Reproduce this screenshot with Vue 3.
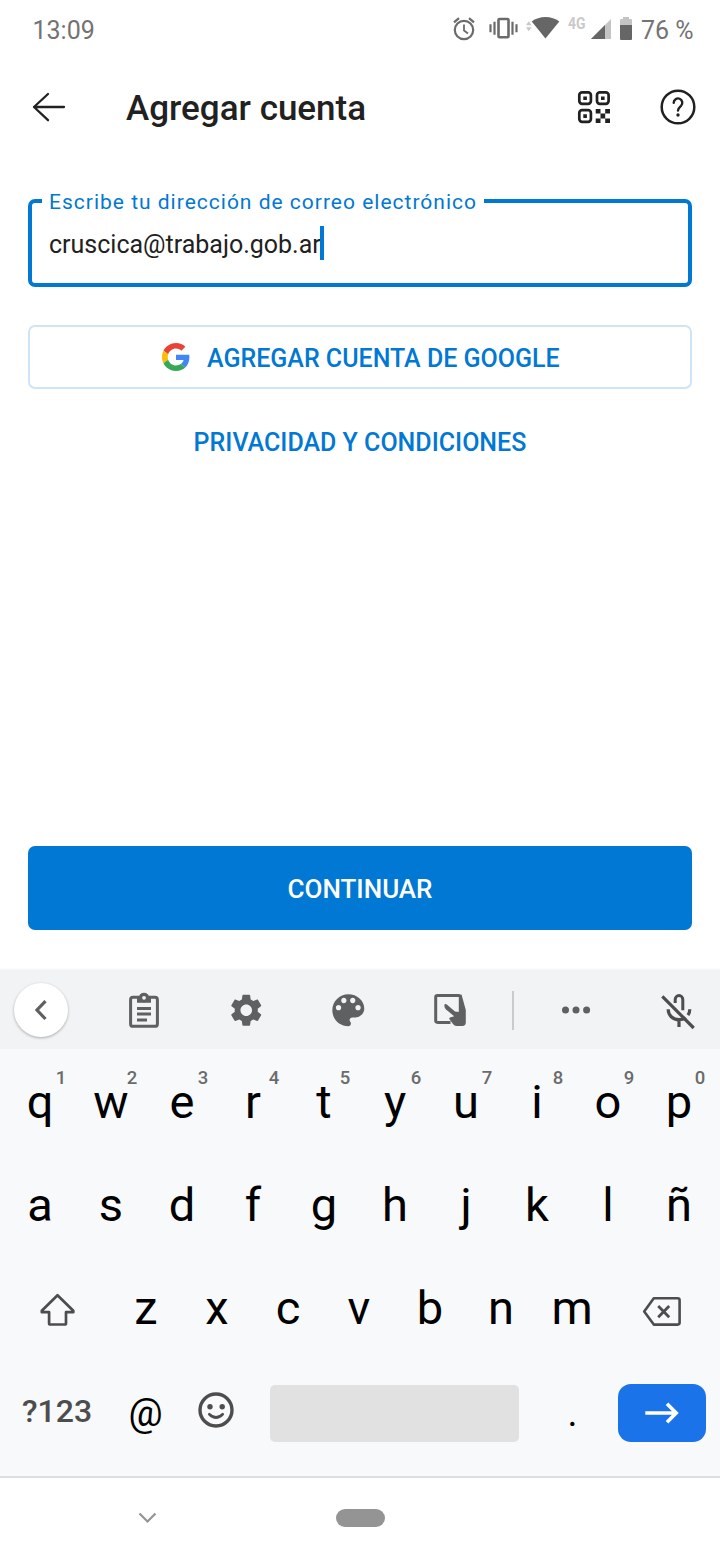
<script setup>
const topRow = [...'qwertyuiop'].map((letter, i) => ({ letter, digit: (i + 1) % 10 }))
const homeRow = [...'asdfghjklñ']
const bottomRow = [...'zxcvbnm']
</script>

<template>
  <div class="screen">
    <div class="status">
      <span class="clock">13:09</span>
      <svg class="status-icons" viewBox="440 0 200 60" width="200" height="60">
        <g fill="none" stroke="#6b6b6b" stroke-width="2.2">
          <circle cx="464" cy="30" r="9.2" />
          <path d="M464 24.5v6l4 3" stroke-width="1.8" />
          <path d="M454 22.3l5-4.2M474 22.3l-5-4.2" />
          <rect x="498.5" y="19" width="10" height="18.2" rx="1" stroke-width="2.6" />
          <path d="M490.5 24.2v8M494.5 21.7v13M512.5 21.7v13M516.5 24.2v8" />
        </g>
        <path d="M526 25.2l2.7-4 2.7 4zM526 27.2l2.7 4 2.7-4z" fill="#c8c8c8" />
        <path d="M531.7 21.6C539 15.5 552 15.5 559.3 21.6L545.5 38.4z" fill="#666" />
        <text x="568" y="29" textLength="17.5" lengthAdjust="spacingAndGlyphs" class="network">4G</text>
        <path d="M611 19v20h-20z" fill="#c4c4c4" />
        <path d="M605 25v14h-14z" fill="#666" />
        <path d="M620 25v-5q0-1 1-1h2v-2h6v2h2q1 0 1 1v5z" fill="#c4c4c4" />
        <path d="M620 25h12v14q0 1-1 1h-10q-1 0-1-1z" fill="#666" />
      </svg>
      <span class="battery">76 %</span>
    </div>

    <header class="appbar">
      <svg class="back" viewBox="24 84 48 48" width="48" height="48">
        <path d="M64 107H34M48 94L34 107L48 120.2" fill="none" stroke="#212121" stroke-width="2.3" stroke-linecap="round" stroke-linejoin="round" />
      </svg>
      <h1>Agregar cuenta</h1>
      <svg class="qr" viewBox="570 84 48 48" width="48" height="48">
        <g fill="none" stroke="#212121" stroke-width="2.7">
          <rect x="579.3" y="92.3" width="11.6" height="11.6" rx="2.8" />
          <rect x="597" y="92.3" width="11.6" height="11.6" rx="2.8" />
          <rect x="579.3" y="110.2" width="11.6" height="11.6" rx="2.8" />
        </g>
        <path fill="#212121" d="M583.3 96.4h3.6v3.6h-3.6zM601 96.4h3.6v3.6H601zM583.3 114.3h3.6v3.6h-3.6zM595.7 109h4.8v4.6h-4.8zM605.2 109h4.8v4.6h-4.8zM600.5 113.6h4.7v4.8h-4.7zM595.7 118.4h4.8v4.7h-4.8zM605.2 118.4h4.8v4.7h-4.8z" />
      </svg>
      <svg class="help" viewBox="654 84 48 48" width="48" height="48">
        <circle cx="678" cy="107" r="16.3" fill="none" stroke="#212121" stroke-width="2.5" />
        <path d="M673.7 102.8a4.3 4.3 0 1 1 7.3 3c-2 1.8-3 2.6-3 4.7" fill="none" stroke="#212121" stroke-width="2.4" stroke-linecap="round" />
        <circle cx="678" cy="115" r="1.7" fill="#212121" />
      </svg>
    </header>

    <main class="form">
      <div class="field">
        <label class="field-label"><span>Escribe tu dirección de correo electrónico</span></label>
        <span class="email">cruscica@trabajo.gob.ar</span><i class="caret"></i>
      </div>
      <div class="google">
        <svg viewBox="0 0 48 48" width="28" height="28">
          <path fill="#EA4335" d="M24 9.5c3.54 0 6.71 1.22 9.21 3.6l6.85-6.85C35.9 2.38 30.47 0 24 0 14.62 0 6.51 5.38 2.56 13.22l7.98 6.19C12.43 13.72 17.74 9.5 24 9.5z" />
          <path fill="#4285F4" d="M46.98 24.55c0-1.57-.15-3.09-.38-4.55H24v9.02h12.94c-.58 2.96-2.26 5.48-4.78 7.18l7.73 6c4.51-4.18 7.09-10.36 7.09-17.65z" />
          <path fill="#FBBC05" d="M10.53 28.59c-.48-1.45-.76-2.99-.76-4.59s.27-3.14.76-4.59l-7.98-6.19C.92 16.46 0 20.12 0 24c0 3.88.92 7.54 2.56 10.78l7.97-6.19z" />
          <path fill="#34A853" d="M24 48c6.48 0 11.93-2.13 15.89-5.81l-7.73-6c-2.15 1.45-4.92 2.3-8.16 2.3-6.26 0-11.57-4.22-13.47-9.91l-7.98 6.19C6.51 42.62 14.62 48 24 48z" />
        </svg>
        <span class="google-text">AGREGAR CUENTA DE GOOGLE</span>
      </div>
      <div class="privacy">PRIVACIDAD Y CONDICIONES</div>
      <div class="continue">CONTINUAR</div>
    </main>

    <section class="keyboard">
      <div class="toolbar">
        <div class="tool first">
          <span class="collapse">
            <svg viewBox="14 983 54 54" width="54" height="54"><path d="M45.5 1001.2L37 1010l8.5 9" fill="none" stroke="#5f6062" stroke-width="3.2" /></svg>
          </span>
        </div>
        <div class="tool">
          <svg viewBox="120 986 48 48" width="48" height="48">
            <rect x="130.6" y="997.3" width="26.8" height="29" rx="2.4" fill="none" stroke="#5f6062" stroke-width="3" />
            <path fill="#5f6062" d="M137 996.5h2.2a5 5 0 0 1 9.6 0h2.2v6.3h-14z" />
            <circle cx="144" cy="997.6" r="4.9" fill="#5f6062" />
            <circle cx="144" cy="997.8" r="1.9" fill="#f1f3f4" />
            <path d="M137 1008.5h14M137 1014h14M137 1020h10" stroke="#5f6062" stroke-width="2.8" />
          </svg>
        </div>
        <div class="tool low">
          <svg viewBox="0 0 24 24" width="38.5" height="38.5"><path fill="#5f6062" d="M19.14 12.94c.04-.3.06-.61.06-.94 0-.32-.02-.64-.07-.94l2.03-1.58c.18-.14.23-.41.12-.61l-1.92-3.32c-.12-.22-.37-.29-.59-.22l-2.39.96c-.5-.38-1.03-.7-1.62-.94l-.36-2.54c-.04-.24-.24-.41-.48-.41h-3.84c-.24 0-.43.17-.47.41l-.36 2.54c-.59.24-1.13.57-1.62.94l-2.39-.96c-.22-.08-.47 0-.59.22L2.74 8.87c-.12.21-.08.47.12.61l2.03 1.58c-.05.3-.09.63-.09.94s.02.64.07.94l-2.03 1.58c-.18.14-.23.41-.12.61l1.92 3.32c.12.22.37.29.59.22l2.39-.96c.5.38 1.03.7 1.62.94l.36 2.54c.05.24.24.41.48.41h3.84c.24 0 .44-.17.47-.41l.36-2.54c.59-.24 1.13-.56 1.62-.94l2.39.96c.22.08.47 0 .59-.22l1.92-3.32c.12-.22.07-.47-.12-.61l-2.01-1.58zM12 15.6c-1.98 0-3.6-1.62-3.6-3.6s1.62-3.6 3.6-3.6 3.6 1.62 3.6 3.6-1.62 3.6-3.6 3.6z" /></svg>
        </div>
        <div class="tool low">
          <svg viewBox="0 0 24 24" width="42.6" height="42.6"><path fill="#5f6062" d="M12 3c-4.97 0-9 4.03-9 9s4.03 9 9 9c.83 0 1.5-.67 1.5-1.5 0-.39-.15-.74-.39-1.01-.23-.26-.38-.61-.38-.99 0-.83.67-1.5 1.5-1.5H16c2.76 0 5-2.24 5-5 0-4.42-4.03-8-9-8zm-5.5 9c-.83 0-1.5-.67-1.5-1.5S5.67 9 6.5 9 8 9.67 8 10.5 7.33 12 6.5 12zm3-4C8.67 8 8 7.33 8 6.5S8.67 5 9.5 5s1.5.67 1.5 1.5S10.33 8 9.5 8zm5 0c-.83 0-1.5-.67-1.5-1.5S13.67 5 14.5 5s1.5.67 1.5 1.5S15.33 8 14.5 8zm3 4c-.83 0-1.5-.67-1.5-1.5S16.67 9 17.5 9s1.5.67 1.5 1.5-.67 1.5-1.5 1.5z" /></svg>
        </div>
        <div class="tool">
          <svg viewBox="426 986 48 48" width="48" height="48">
            <path d="M450.5 1022.4H437.5q-1.8 0-1.8-1.8V997.3q0-1.8 1.8-1.8h21q1.8 0 1.8 1.8v14" fill="none" stroke="#5f6062" stroke-width="3" />
            <path fill="#5f6062" d="M459 1011.8V996l2.5-1.5 4.3 15.5v12.5q0 3.4-3.4 3.4h-6q-2 0-3.2-1.6l-3.6-4.8q-.8-1.2.4-2l4.2-1.2-8.2-6.8q-2.4-2.6-1.2-5.4 1-.4 2 .3l8.2 7q2 .6 4 .4z" />
          </svg>
        </div>
        <i class="divider"></i>
        <div class="tool dots">
          <svg viewBox="552 986 48 48" width="48" height="48"><g fill="#5f6062"><circle cx="565.5" cy="1010" r="3.5" /><circle cx="576" cy="1010" r="3.5" /><circle cx="586.6" cy="1010" r="3.5" /></g></svg>
        </div>
        <div class="tool mic">
          <svg viewBox="654 986 48 48" width="48" height="48">
            <g fill="none" stroke="#4c4d4c" stroke-width="3.2">
              <path d="M662.3 996.3L693.7 1028" />
              <path d="M675.2 1003v-3.6a3.7 3.7 0 0 1 7.6 0v10.8" stroke-width="3" />
              <path d="M668.2 1009.3c0 6 4.6 10.4 10.8 10.4 3 0 5-.6 6.8-2M679 1019v8M689.8 1009.3q0 3-1.8 5.8" />
            </g>
          </svg>
        </div>
      </div>

      <div class="row">
        <div v-for="key in topRow" :key="key.letter" class="key">{{ key.letter }}<sup>{{ key.digit }}</sup></div>
      </div>
      <div class="row">
        <div v-for="letter in homeRow" :key="letter" class="key">{{ letter }}</div>
      </div>
      <div class="row">
        <div class="wide">
          <svg viewBox="33.5 1286 48 48" width="48" height="48"><path d="M57 1295.3L41.3 1310.8v1.4H48.6v11q0 1.3 1.3 1.3H64.2q1.3 0 1.3-1.3v-11H72.8v-1.4z" fill="none" stroke="#4d4d4d" stroke-width="2.7" stroke-linejoin="round" /></svg>
        </div>
        <div v-for="letter in bottomRow" :key="letter" class="key">{{ letter }}</div>
        <div class="wide">
          <svg viewBox="637 1286 48 48" width="48" height="48">
            <path d="M653.8 1298.2h23.8q2 0 2 2v22.4q0 2-2 2h-23.8L644.2 1311.4z" fill="none" stroke="#4d4d4d" stroke-width="2.6" stroke-linejoin="round" />
            <path d="M658.2 1306l11 11.2M669.2 1306l-11 11.2" stroke="#4d4d4d" stroke-width="2.8" />
          </svg>
        </div>
      </div>
      <div class="row actions">
        <span class="symbols">?123</span>
        <span class="at">@</span>
        <svg class="smile" viewBox="192 1386 48 48" width="48" height="48">
          <circle cx="216" cy="1410" r="16" fill="none" stroke="#4d4d4d" stroke-width="3.4" />
          <circle cx="210" cy="1406.7" r="2.7" fill="#4d4d4d" /><circle cx="222.2" cy="1406.7" r="2.7" fill="#4d4d4d" />
          <path d="M209.3 1414.2q6.7 6.6 13.4 0" fill="none" stroke="#4d4d4d" stroke-width="2.6" stroke-linecap="round" />
        </svg>
        <span class="space"></span>
        <span class="dot">.</span>
        <span class="enter">
          <svg viewBox="618 1384 88 58" width="88" height="58"><path d="M645.3 1413H676M667 1403.7L676.2 1413L667 1422.3" fill="none" stroke="#fff" stroke-width="3.6" /></svg>
        </span>
      </div>
    </section>

    <nav class="navbar">
      <svg viewBox="130 1500 36 36" width="36" height="36"><path d="M139.5 1513.5l8 8 8-8" fill="none" stroke="#949494" stroke-width="2.2" /></svg>
      <i class="pill"></i>
    </nav>
  </div>
</template>

<style>
body {
  margin: 0;
  background: #fff;
}
</style>

<style scoped>
.screen {
  width: 720px;
  height: 1560px;
  overflow: hidden;
  display: flex;
  flex-direction: column;
  background: #fff;
  font-family: Roboto, "Liberation Sans", sans-serif;
  color: #212121;
}
svg { display: block; flex: none; }
.status {
  height: 60px;
  display: flex;
  align-items: center;
  box-sizing: border-box;
  padding-left: 32.5px;
  font-size: 25px;
  line-height: 30px;
  color: #737373;
}
.clock { width: 407.5px; padding-top: 2px; }
.battery { padding: 2px 0 0 1px; white-space: nowrap; }
.network { font: 700 17px Roboto, sans-serif; fill: #cacaca; }
.appbar {
  height: 96px;
  display: flex;
  align-items: center;
}
.back { margin-left: 24px; }
h1 {
  margin: 0 0 0 54px;
  width: 444px;
  font-size: 35px;
  font-weight: 500;
  white-space: nowrap;
}
.help { margin-left: 36px; }
.form {
  height: 814px;
  box-sizing: border-box;
  padding: 43px 28px 0;
}
.field {
  position: relative;
  box-sizing: border-box;
  height: 88px;
  border: 4px solid #0078d4;
  border-radius: 7px;
  padding: 0 17px 0;
  display: flex;
  align-items: center;
}
.field-label {
  position: absolute;
  left: 10px;
  top: -14px;
  width: 442px;
  box-sizing: border-box;
  padding-left: 7px;
  background: #fff;
  color: #0078d4;
  font-size: 21px;
  line-height: 26px;
  letter-spacing: 1px;
  white-space: nowrap;
}
.email { font-size: 25px; line-height: 30px; padding-top: 4px; }
.caret {
  width: 4px;
  height: 34px;
  margin-left: -1px;
  background: #0078d4;
}
.google {
  box-sizing: border-box;
  height: 64px;
  margin-top: 38px;
  border: 2px solid #cfe4f6;
  border-radius: 7px;
  display: flex;
  align-items: center;
  padding-left: 132px;
  gap: 17px;
}
.google, .privacy {
  font-size: 25px;
  line-height: 32px;
  font-weight: 500;
  color: #0078d4;
  white-space: nowrap;
}
.google-text { padding-top: 4px; }
.privacy {
  margin-top: 38px;
  text-align: center;
}
.continue {
  margin-top: 387px;
  height: 84px;
  line-height: 86px;
  border-radius: 7px;
  background: #0078d4;
  color: #fff;
  font-size: 26px;
  font-weight: 500;
  text-align: center;
}
.keyboard {
  height: 508px;
  box-sizing: border-box;
  border-bottom: 2px solid #dcdee1;
  background: #f8f9fb;
}
.toolbar {
  height: 79px;
  display: flex;
  align-items: center;
  background: #f1f3f4;
  box-shadow: 0 -1px 2px #f3f4f5;
}
.tool { width: 102px; display: flex; justify-content: center; flex: none; }
.low { padding-top: 1px; }
.first { width: 82px; margin-right: 11px; }
.collapse {
  width: 54px;
  height: 54px;
  border-radius: 50%;
  background: #fff;
  box-shadow: 0 1px 3px #0000004d;
}
.divider { width: 2px; height: 39px; margin: 2px 0 0 11px; background: #c8cacc; }
.dots { margin-left: 11px; }
.mic { width: 84px; margin-left: 9px; }
.row {
  height: 103px;
  display: flex;
  padding-left: 4.5px;
}
.key {
  position: relative;
  width: 71px;
  text-align: center;
  font-size: 47px;
  line-height: 105px;
  color: #000;
}
.key sup {
  position: absolute;
  left: 56.4px;
  transform: translateX(-50%);
  top: 18px;
  font-size: 18.5px;
  line-height: 22px;
  font-weight: 500;
  color: #6a6b6c;
}
.wide { width: 106px; box-sizing: border-box; padding-top: 7px; display: flex; justify-content: center; align-items: center; }
.actions { color: #000; align-items: center; height: 110px; padding-left: 0; }
.symbols { width: 114px; text-align: center; font-size: 32px; font-weight: 500; color: #4d4d4d; margin-top: -4px; }
.at { width: 63px; text-align: center; font-size: 38px; }
.smile { margin: -6px 0 0 15px; }
.space { margin-left: 30px; width: 249px; height: 57px; border-radius: 5px; background: #e1e1e1; }
.dot { width: 99px; padding-left: 8px; box-sizing: border-box; text-align: center; font-size: 38px; }
.enter { width: 88px; height: 58px; border-radius: 13px; background: #1a73e8; }
.navbar { height: 82px; display: flex; align-items: center; box-sizing: border-box; padding-bottom: 2px; }
.navbar svg { margin-left: 130px; }
.pill { width: 49px; height: 18px; margin-left: 170px; border-radius: 9px; background: #949494; }
</style>
